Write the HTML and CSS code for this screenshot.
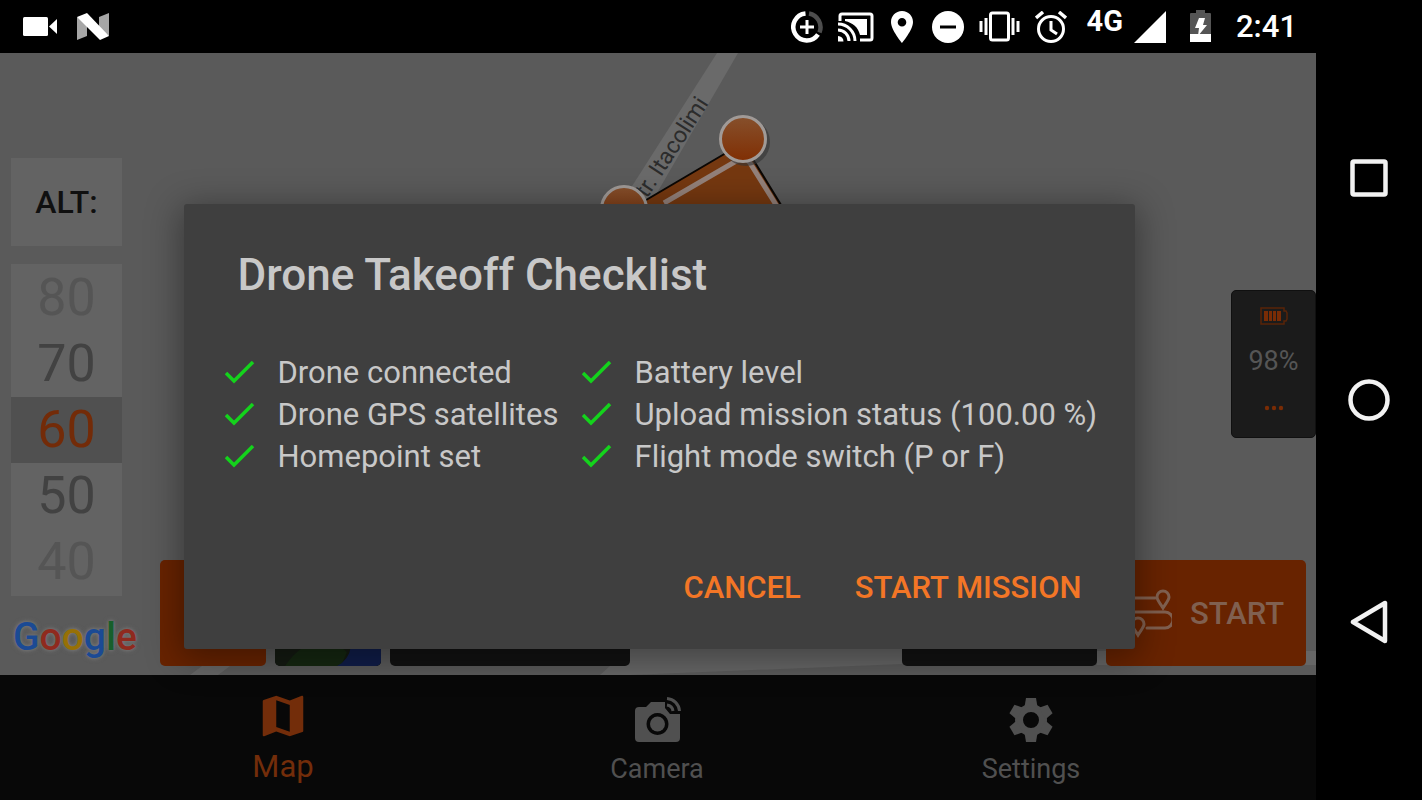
FILE: index.html
```html
<!DOCTYPE html>
<html lang="en">
<head>
<meta charset="utf-8">
<title>Drone Takeoff Checklist</title>
<link rel="stylesheet" href="styles.css">
</head>
<body>
<div class="device">
  <div class="screen">
    <header class="status">
      <div class="status-left">
        <svg width="34" height="20" viewBox="0 0 34 20" fill="#fff"><rect x="0" y="0" width="25" height="19" rx="1.5"/><path d="M34 2v15l-8-7.500z"/></svg>
        <svg width="33" height="27" viewBox="0 0 33 27"><path d="M0 4l10 6v13L0 27zM22 4l10-4v23l-10-7z" fill="#a6a6a6"/><path d="M0 4L10 0l22 23-9 4z" fill="#fff"/></svg>
      </div>
      <div class="status-right">
        <svg width="32" height="32" viewBox="0 0 32 32" fill="none" stroke-width="4.500"><path d="M18 2.500a14 14 0 0 1 10.500 19" stroke="#4d4d4d"/><path d="M14.500 2.500a13.500 13.500 0 1 0 12.500 21" stroke="#fff"/><path d="M16 9v14M9 16h14" stroke="#fff" stroke-width="3"/></svg>
        <svg width="36" height="30" viewBox="0 0 36 30" fill="none" stroke="#fff" stroke-width="3"><path d="M2 9V4q0-2 2-2h28q2 0 2 2v22q0 2-2 2H22"/><path d="M7 7h22v16h-7C20 15 15 11 7 9z" fill="#fff" stroke="none"/><path d="M0 12a17 17 0 0 1 17 17M0 18a11 11 0 0 1 11 11"/><path d="M0 24a5.500 5.500 0 0 1 5.500 5.500H0z" fill="#fff" stroke="none"/></svg>
        <svg width="26" height="32" viewBox="0 0 26 32"><path fill="#fff" fill-rule="evenodd" d="M13 0C6.500 0 2 5 2 11c0 8 11 21 11 21s11-13 11-21C24 5 19.500 0 13 0zm0 7a4.300 4.300 0 1 1 0 8.600A4.300 4.300 0 0 1 13 7z"/></svg>
        <svg width="34" height="32" viewBox="0 0 34 32"><circle cx="18" cy="16" r="16" fill="#fff"/><path d="M10 16h16" stroke="#000" stroke-width="3"/></svg>
        <svg width="41" height="31" viewBox="0 0 41 31" fill="none" stroke="#fff" stroke-width="3"><rect x="11.500" y="2" width="18" height="27" rx="2"/><path d="M7 7v17M2 10v11M34 7v17M39 10v11"/></svg>
        <svg width="32" height="32" viewBox="0 0 32 32" fill="none" stroke="#fff" stroke-width="3"><circle cx="16" cy="18" r="12.500"/><path d="M16 10v9l6 4"/><path d="M1 7l7-6M31 7l-7-6" stroke-width="3.500"/></svg>
        <div class="cell"><span class="cell-type">4G</span>
        <svg width="32" height="32" viewBox="0 0 32 32"><path d="M32 0v32H0z" fill="#fff"/></svg></div>
        <svg class="status-battery" width="22" height="33" viewBox="0 0 22 33"><path d="M6 0h9v3h5q1 0 1 1v20H0V4q0-1 1-1h5z" fill="#555"/><path d="M0 24h21v8H0z" fill="#fff"/><path d="M9 8h6l-2 7h4l-9 11 1-8H5z" fill="#fff"/></svg>
        <span class="clock">2:41</span>
      </div>
    </header>

    <div class="app">
      <main class="map">
        <svg class="map-canvas" viewBox="0 0 1316 622" preserveAspectRatio="xMidYMid slice">
          <defs><linearGradient id="pin" x1="0" y1="0" x2="0" y2="1"><stop offset="0" stop-color="#86502c"/><stop offset="1" stop-color="#802e03"/></linearGradient></defs>
          <path d="M717 0h21L650 152h-30z" fill="#6a6a6a"/>
          <path d="M630 595h272v16L630 622H600zM190 622l12-9h28l-12 9z" fill="#666"/>
          <path d="M1097 598h219v14h-219z" fill="#666"/>
          <path d="M624 160L743 90l92 150H624z" fill="#753810" stroke="#0b0704" stroke-width="2"/>
          <path d="M664 150l74-43q8-4 12 3l28 45" fill="none" stroke="#93817a" stroke-width="5"/>
          <text class="road" transform="translate(647 146) rotate(-57)">tr. Itacolimi</text>
          <circle cx="746" cy="89" r="24" fill="#333" opacity=".6"/>
          <circle cx="743" cy="86" r="22.500" fill="url(#pin)" stroke="#a09a97" stroke-width="3"/>
          <circle cx="624" cy="156" r="22.500" fill="url(#pin)" stroke="#a09a97" stroke-width="3"/>
        </svg>

        <div class="hud">
          <aside class="altitude">
            <div class="alt-label">ALT:</div>
            <ul class="picker">
              <li class="far">80</li>
              <li>70</li>
              <li class="selected">60</li>
              <li>50</li>
              <li class="far">40</li>
            </ul>
            <div class="google"><span class="blue">G</span><span class="red">o</span><span class="yellow">o</span><span class="blue">g</span><span class="green">l</span><span class="red">e</span></div>
          </aside>

          <div class="drone-battery">
            <svg width="28" height="18" viewBox="0 0 28 18"><path d="M1 1h23v3h2l1 2v6l-1 2h-2v3H1z" fill="none" stroke="#5a2408" stroke-width="1.500"/><path d="M4 4h4v10H4zM9 4h3v10H9zM13 4h3v10h-3zM17 4h4v10h-4z" fill="#7a2c05"/></svg>
            <span>98%</span>
            <svg width="20" height="6" viewBox="0 0 20 6" fill="#7a2c05"><circle cx="3" cy="3" r="2.200"/><circle cx="10" cy="3" r="2.200"/><circle cx="17" cy="3" r="2.200"/></svg>
          </div>

          <div class="toolbar">
            <button class="tile orange" type="button" aria-label="Mission"></button>
            <button class="tile photo" type="button" aria-label="Map type">
              <svg viewBox="0 0 106 106" preserveAspectRatio="none"><path d="M0 0h106v106H0z" fill="#141a12"/><path d="M10 106q20-30 50-24l12 10-6 14z" fill="#152711"/><path d="M106 40v66H62q12-6 14-20z" fill="#101d49"/></svg>
            </button>
            <div class="tile info"></div>
            <div class="tile stats"></div>
            <button class="tile orange start" type="button">
              <svg width="56" height="50" viewBox="0 0 56 50" fill="none" stroke="#806050" stroke-width="3" stroke-linecap="round"><path d="M6 10h33M49 24h-36a7 7 0 0 0-7 8M49 24a8 8 0 0 1 0 16H31"/><path d="M47 20c-3-5-6-8-6-11a6 6 0 0 1 12 0c0 3-3 6-6 11zM22 47c-3-5-6-8-6-11a6 6 0 0 1 12 0c0 3-3 6-6 11z"/></svg>
              START
            </button>
          </div>
        </div>
      </main>

      <nav class="tabs">
        <a class="tab active" href="#map">
          <svg width="54" height="54" viewBox="0 0 24 24"><path fill="currentColor" d="M20.500 3l-.16.030L15 5.100 9 3 3.360 4.900c-.21.070-.36.250-.36.480V20.500c0 .28.220.5.500.5l.16-.030L9 18.900l6 2.100 5.640-1.900c.21-.070.360-.25.360-.48V3.500c0-.28-.22-.5-.5-.5zM15 19l-6-2.110V5l6 2.110V19z"/></svg>
          <span>Map</span>
        </a>
        <a class="tab" href="#camera">
          <svg width="48" height="48" viewBox="0 0 48 48"><path fill="currentColor" fill-rule="evenodd" d="M6 11h7l5-5h14v6l5 6h10v24q0 4-4 4H6q-4 0-4-4V15q0-4 4-4zM24.500 17a11 11 0 1 0 .01 0z"/><circle cx="24.500" cy="28" r="7.500" fill="currentColor"/><path d="M34 9a7 7 0 0 1 6 6M34 2.500a13.500 13.500 0 0 1 12.500 12.500" fill="none" stroke="currentColor" stroke-width="3"/></svg>
          <span>Camera</span>
        </a>
        <a class="tab" href="#settings">
          <svg width="48" height="48" viewBox="0 0 48 48"><circle cx="24" cy="24" r="12" fill="none" stroke="currentColor" stroke-width="8"/><g fill="currentColor"><path id="tooth" d="M19 2h10l1.500 9h-13z"/><use href="#tooth" transform="rotate(60 24 24)"/><use href="#tooth" transform="rotate(120 24 24)"/><use href="#tooth" transform="rotate(180 24 24)"/><use href="#tooth" transform="rotate(240 24 24)"/><use href="#tooth" transform="rotate(300 24 24)"/></g></svg>
          <span>Settings</span>
        </a>
      </nav>

      <div class="overlay">
        <section class="dialog" role="dialog" aria-labelledby="dialog-title">
          <h1 id="dialog-title">Drone Takeoff Checklist</h1>
          <ul class="checklist">
            <li><svg width="30" height="24" viewBox="0 0 30 24"><path d="M1 12l8 8L28 1"/></svg>Drone connected</li>
            <li><svg width="30" height="24" viewBox="0 0 30 24"><path d="M1 12l8 8L28 1"/></svg>Battery level</li>
            <li><svg width="30" height="24" viewBox="0 0 30 24"><path d="M1 12l8 8L28 1"/></svg>Drone GPS satellites</li>
            <li><svg width="30" height="24" viewBox="0 0 30 24"><path d="M1 12l8 8L28 1"/></svg>Upload mission status (100.00 %)</li>
            <li><svg width="30" height="24" viewBox="0 0 30 24"><path d="M1 12l8 8L28 1"/></svg>Homepoint set</li>
            <li><svg width="30" height="24" viewBox="0 0 30 24"><path d="M1 12l8 8L28 1"/></svg>Flight mode switch (P or F)</li>
          </ul>
          <div class="actions">
            <button type="button">CANCEL</button>
            <button type="button">START MISSION</button>
          </div>
        </section>
      </div>
    </div>
  </div>

  <div class="sysnav">
    <button type="button" aria-label="Recent apps"><svg width="44" height="44" viewBox="0 0 44 44"><rect x="5.500" y="5.500" width="33" height="33" rx="1.500"/></svg></button>
    <button type="button" aria-label="Home"><svg width="44" height="44" viewBox="0 0 44 44"><circle cx="22" cy="22" r="18.500"/></svg></button>
    <button type="button" aria-label="Back"><svg width="44" height="44" viewBox="0 0 44 44"><path d="M38 3v38L6 22z"/></svg></button>
  </div>
</div>
</body>
</html>
```

FILE: styles.css
```css
* { box-sizing: border-box; }

body {
  margin: 0;
  background: #000;
  font-family: Roboto, "Noto Sans", sans-serif;
}

ul { list-style: none; margin: 0; padding: 0; }
svg { display: block; flex: none; }
button { border: 0; padding: 0; background: none; font: inherit; }

.device {
  display: grid;
  grid-template-columns: 1fr 106px;
  min-height: 100vh;
}

.screen { display: flex; flex-direction: column; }

/* Status bar */
.status {
  display: flex;
  justify-content: space-between;
  align-items: center;
  height: 53px;
  padding: 0 19px 0 23px;
  color: #fff;
}
.status-left { display: flex; align-items: center; gap: 20px; }
.status-right { display: flex; align-items: center; gap: 15px; }
.cell { display: flex; gap: 11px; margin-left: 5px; }
.cell-type { font-size: 29px; line-height: 20px; font-weight: 700; }
.status-battery { margin: 0 9px; }
.clock { font-size: 31px; line-height: 40px; font-weight: 500; }

/* Map and its controls */
.app {
  position: relative;
  flex: 1;
  display: flex;
  flex-direction: column;
}
.map {
  position: relative;
  flex: 1;
  display: flex;
  background: #5a5a5a;
}
.map-canvas { position: absolute; inset: 0; width: 100%; height: 100%; }
.road { font-size: 23px; fill: #2c2c2c; }

.hud {
  position: relative;
  flex: 1;
  display: grid;
  grid-template-columns: 160px 1fr;
  grid-template-rows: 1fr auto;
}

.altitude {
  grid-row: 1 / 3;
  display: flex;
  flex-direction: column;
  justify-content: flex-end;
  padding: 0 38px 13px 11px;
}
.alt-label {
  margin-bottom: 18px;
  background: #636363;
  color: #101010;
  font-size: 32px;
  font-weight: 500;
  line-height: 88px;
  text-align: center;
}
.picker { padding: 1px 0; background: #636363; color: #424242; }
.picker li { font-size: 52px; line-height: 66px; text-align: center; }
.picker .far { color: #555; }
.picker .selected { background: #505050; color: #732b08; }

.google {
  margin: 16px 0 0 2px;
  font-size: 39px;
  line-height: 50px;
  font-weight: 500;
  text-shadow: 0 0 3px #777, 0 0 5px #777;
}
.blue { color: #1b4a94; }
.red { color: #8f2a1e; }
.yellow { color: #977006; }
.green { color: #175f2b; }

.drone-battery {
  grid-column: 2;
  grid-row: 1 / 3;
  justify-self: end;
  align-self: center;
  display: flex;
  flex-direction: column;
  align-items: center;
  width: 85px;
  height: 148px;
  padding-top: 16px;
  gap: 20px;
  border: 1px solid #101010;
  border-radius: 5px;
  background: #1b1b1b;
  color: #555;
  font-size: 27px;
  line-height: 32px;
}
.drone-battery span { margin-bottom: 8px; }

.toolbar {
  grid-column: 2;
  grid-row: 2;
  display: flex;
  gap: 9px;
  padding: 0 10px 9px 0;
}
.tile {
  width: 106px;
  height: 106px;
  border-radius: 5px;
  overflow: hidden;
  background: #121212;
}
.tile.orange { background: #682300; }
.photo svg { width: 100%; height: 100%; }
.tile.info { width: 240px; }
.tile.stats { width: 195px; margin-left: auto; }
.tile.start {
  display: flex;
  align-items: center;
  gap: 18px;
  width: 200px;
  padding-left: 10px;
  color: #806050;
  font-size: 31px;
  font-weight: 500;
}

/* Bottom tabs */
.tabs {
  display: flex;
  height: 125px;
  padding: 0 98px 0 96px;
  background: #080808;
}
.tab {
  flex: 1;
  display: flex;
  flex-direction: column;
  align-items: center;
  padding-top: 21px;
  color: #505050;
  font-size: 27px;
  line-height: 32px;
  text-decoration: none;
}
.tab span { margin-top: 9px; }
.tab.active { padding-top: 14px; color: #732d0a; font-size: 31px; }
.tab.active span { margin-top: 8px; }

/* Checklist dialog */
.overlay {
  position: absolute;
  inset: 0;
  display: flex;
  align-items: center;
  justify-content: center;
  padding-left: 2px;
}
.dialog {
  width: 951px;
  max-width: 90%;
  padding: 43px 53px 31px 54px;
  border-radius: 3px;
  background: #3f3f3f;
  color: #c8c8c8;
  box-shadow: 0 6px 34px 4px rgba(0, 0, 0, .36);
}
h1 { margin: 0 0 49px; font-size: 44px; line-height: 56px; font-weight: 500; }
.checklist {
  display: grid;
  grid-template-columns: 357px 1fr;
  margin: 0 -24px 80px -13px;
  font-size: 31px;
  line-height: 42px;
  white-space: nowrap;
}
.checklist li { display: flex; align-items: center; gap: 23px; }
.checklist path { fill: none; stroke: #14d31c; stroke-width: 3.5; }
.actions { display: flex; justify-content: flex-end; gap: 54px; }
.actions button {
  color: #f37626;
  font-size: 31px;
  line-height: 60px;
  font-weight: 500;
}

/* System navigation */
.sysnav {
  display: flex;
  flex-direction: column;
  align-items: center;
  justify-content: center;
  gap: 178px;
}
.sysnav svg { fill: none; stroke: #f2f2f2; stroke-width: 4.5; stroke-linejoin: round; }
```
